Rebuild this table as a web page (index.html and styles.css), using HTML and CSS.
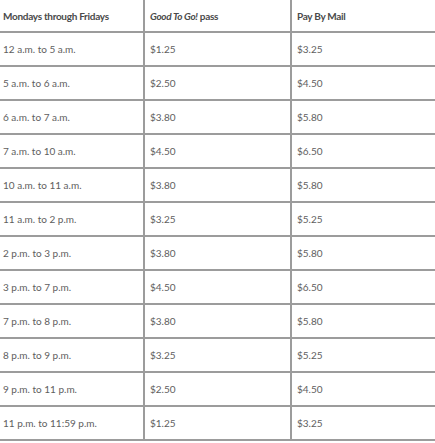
FILE: index.html
```html
<!DOCTYPE html>
<html>
<head>
<meta charset="utf-8">
<link rel="stylesheet" href="styles.css">
</head>
<body>
<table class="rates">
  <thead>
    <tr><th class="c1">Mondays through Fridays</th><th class="c2"><i>Good To Go!</i> pass</th><th class="c3">Pay By Mail</th></tr>
  </thead>
  <tbody>
    <tr><td class="c1">12 a.m. to 5 a.m.</td><td class="c2">$1.25</td><td class="c3">$3.25</td></tr>
    <tr><td class="c1">5 a.m. to 6 a.m.</td><td class="c2">$2.50</td><td class="c3">$4.50</td></tr>
    <tr><td class="c1">6 a.m. to 7 a.m.</td><td class="c2">$3.80</td><td class="c3">$5.80</td></tr>
    <tr><td class="c1">7 a.m. to 10 a.m.</td><td class="c2">$4.50</td><td class="c3">$6.50</td></tr>
    <tr><td class="c1">10 a.m. to 11 a.m.</td><td class="c2">$3.80</td><td class="c3">$5.80</td></tr>
    <tr><td class="c1">11 a.m. to 2 p.m.</td><td class="c2">$3.25</td><td class="c3">$5.25</td></tr>
    <tr><td class="c1">2 p.m. to 3 p.m.</td><td class="c2">$3.80</td><td class="c3">$5.80</td></tr>
    <tr><td class="c1">3 p.m. to 7 p.m.</td><td class="c2">$4.50</td><td class="c3">$6.50</td></tr>
    <tr><td class="c1">7 p.m. to 8 p.m.</td><td class="c2">$3.80</td><td class="c3">$5.80</td></tr>
    <tr><td class="c1">8 p.m. to 9 p.m.</td><td class="c2">$3.25</td><td class="c3">$5.25</td></tr>
    <tr><td class="c1">9 p.m. to 11 p.m.</td><td class="c2">$2.50</td><td class="c3">$4.50</td></tr>
    <tr><td class="c1">11 p.m. to 11:59 p.m.</td><td class="c2">$1.25</td><td class="c3">$3.25</td></tr>
  </tbody>
</table>
</body>
</html>
```
FILE: styles.css
```css
html, body {
  margin: 0;
  padding: 0;
  background: #fff;
}
.rates {
  width: 435px;
  border-collapse: separate;
  border-spacing: 0;
  table-layout: fixed;
  font-family: Lato, "Noto Sans", sans-serif;
  font-size: 10px;
  color: #5e5e5e;
}
.rates th, .rates td {
  text-align: left;
  vertical-align: middle;
  border-bottom: 2px solid #9c9c9c;
  padding: 0;
  white-space: nowrap;
  box-sizing: border-box;
}
.rates th {
  height: 33px;
  font-weight: 700;
  letter-spacing: -0.3px;
  color: #4a4a4a;
}
.rates td {
  height: 34px;
}
.rates .c1 {
  width: 145px;
  padding-left: 3px;
  border-right: 2px solid #9c9c9c;
}
.rates .c2 {
  width: 147px;
  padding-left: 5px;
  border-right: 2px solid #9c9c9c;
}
.rates .c3 {
  padding-left: 5px;
}
```
